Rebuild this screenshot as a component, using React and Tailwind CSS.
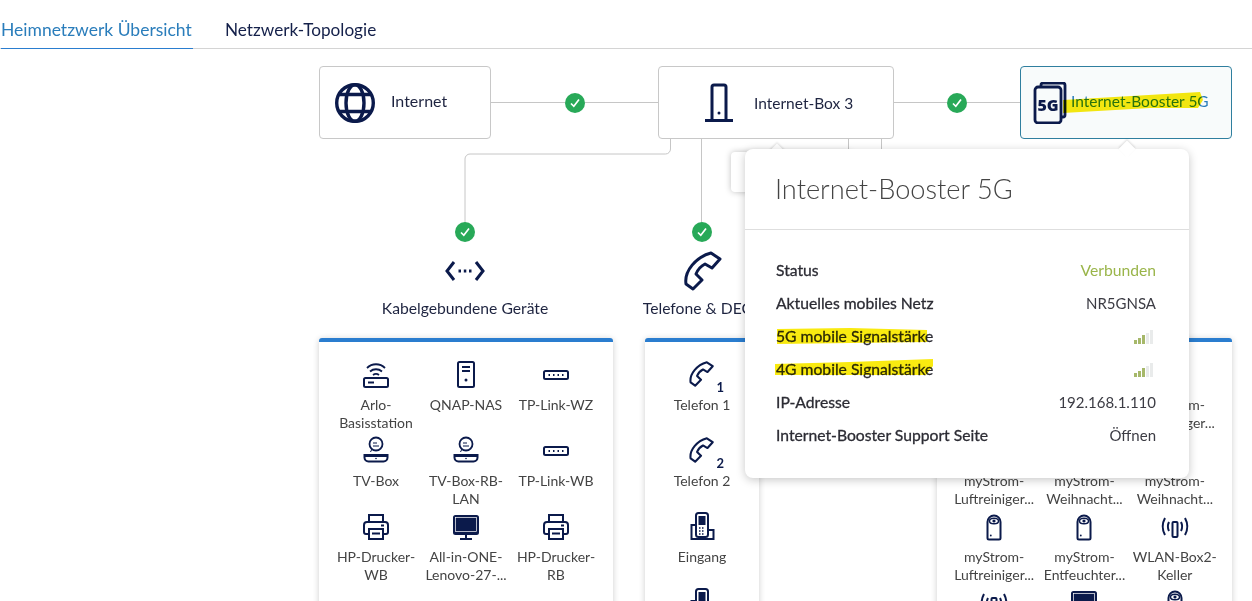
const navy = "#0b1a4b";

function Svg({ size = 32, className = "", children }) {
  return (
    <svg width={size} height={size} viewBox="0 0 32 32" fill="none" stroke={navy} strokeWidth="2" className={className}>
      {children}
    </svg>
  );
}

const RouterWifi = () => (
  <Svg>
    <rect x="4" y="19" width="24" height="9" rx="1.500" />
    <path d="M8 23.500h6" />
    <path d="M7 9c5-5 13-5 18 0M10 12.500c3.500-3 8.500-3 12 0M13 16c2-1.500 4-1.500 6 0" strokeWidth="1.800" />
  </Svg>
);

const Server = () => (
  <Svg>
    <rect x="8" y="3" width="16" height="25" rx="1.500" />
    <path d="M12 8h8M12 12h8" />
    <circle cx="16" cy="21" r="1.500" fill={navy} stroke="none" />
  </Svg>
);

const Switch = () => (
  <Svg>
    <rect x="4" y="12" width="24" height="8" rx="1.500" />
    <path d="M8.500 16h2M13 16h2M17.500 16h2M22 16h2" strokeDasharray="1.500 1" />
  </Svg>
);

const TvBox = () => (
  <Svg>
    <circle cx="16" cy="9" r="6.500" strokeWidth="1.800" />
    <path d="M12 14l-1.500 3M13 8h4M13 11h6" strokeWidth="1" />
    <path d="M4.500 20h23v2.500a4 4 0 0 1-4 4h-15a4 4 0 0 1-4-4z" />
    <path d="M4 20.500h24" strokeWidth="3" />
    <circle cx="16" cy="23.500" r="0.800" fill={navy} stroke="none" />
  </Svg>
);

const Printer = () => (
  <Svg>
    <path d="M9 11V4h14v7" />
    <path d="M9 23H6a2 2 0 0 1-2-2v-7a3 3 0 0 1 3-3h18a3 3 0 0 1 3 3v7a2 2 0 0 1-2 2h-3" />
    <rect x="9" y="18" width="14" height="10" />
    <path d="M12 22.500h8M21 14.500h3" />
  </Svg>
);

const Monitor = () => (
  <Svg>
    <rect x="4" y="5" width="24" height="18" rx="1.500" fill={navy} stroke={navy} />
    <rect x="5.500" y="6.500" width="21" height="14" fill={navy} stroke="#fff" strokeWidth="0.700" />
    <path d="M16 23v5M10 28h12" />
  </Svg>
);

// handset outline, earpiece top right, mouthpiece bottom left
const HandsetPath = ({ size, strokeWidth }) => (
  <svg width={size} height={size} viewBox="0 0 40 40" fill="none" stroke={navy} strokeWidth={strokeWidth} strokeLinejoin="round">
    <path d="M29 2L38 8 30 17 23 13C19 15 16 18 14 23L20 29 11 38 4 33C2 20 14 6 29 2Z" />
  </svg>
);

const Handset = ({ num }) => (
  <div className="relative w-[34px] h-[34px]">
    <div className="absolute left-[3px] top-[3px]">
      <HandsetPath size={26} strokeWidth={3.2} />
    </div>
    <span className="absolute right-[-5px] bottom-[-3px] text-[13px] leading-4 font-bold text-[#0b1a4b]">{num}</span>
  </div>
);

const Dect = () => (
  <Svg>
    <rect x="10" y="2" width="12" height="24" rx="2.500" />
    <rect x="12.500" y="5" width="7" height="9" fill={navy} stroke="none" />
    <path d="M13 17h6M13 20h6M13 23h6" strokeDasharray="1.500 1.500" strokeWidth="1.500" />
    <path d="M9 14H5.500v14h22V19H23" />
  </Svg>
);

const PlugBox = () => (
  <Svg>
    <path d="M9.500 11a6.500 6.500 0 0 1 13 0v16a1.500 1.500 0 0 1-1.500 1.500H11A1.500 1.500 0 0 1 9.500 27z" />
    <ellipse cx="16" cy="10" rx="4.500" ry="2.800" strokeWidth="1.500" />
    <circle cx="16" cy="10" r="1.600" fill={navy} stroke="none" />
    <circle cx="12.800" cy="24.500" r="0.900" fill={navy} stroke="none" />
  </Svg>
);

const WlanBox = () => (
  <Svg>
    <rect x="13.500" y="11" width="5" height="15" rx="1" />
    <path d="M10 11c-1.500 3-1.500 6 0 9M22 11c1.500 3 1.500 6 0 9M6 7c-3 5.500-3 11.500 0 17M26 7c3 5.500 3 11.500 0 17" />
  </Svg>
);

const Check = () => (
  <div className="w-5 h-5 rounded-full bg-[#28a958] flex items-center justify-center shrink-0">
    <svg width="14" height="14" viewBox="0 0 14 14" fill="none" stroke="#fff" strokeWidth="1.700">
      <path d="M3 7.500l2.800 2.800L11 3.500" />
    </svg>
  </div>
);

function Item({ icon, lines }) {
  return (
    <div className="flex flex-col items-center">
      <div className="h-[34px] flex items-center justify-center">{icon}</div>
      <div className="mt-1 text-[14px] leading-[18px] text-[#444] text-center whitespace-nowrap">
        {lines.map((l) => (
          <div key={l}>{l}</div>
        ))}
      </div>
    </div>
  );
}

function Column({ width, icon, title, cols, items, cardHeight, headClass = "" }) {
  return (
    <div className="flex flex-col items-center shrink-0" style={{ width }}>
      <div className={`h-5 ${headClass}`}>{title && <Check />}</div>
      <div className={`mt-[11px] h-9 flex items-center justify-center ${headClass}`}>{icon}</div>
      <div className={`mt-[9px] h-5 text-[15.7px] leading-5 text-[#1e2440] whitespace-nowrap ${headClass}`}>{title}</div>
      <div
        className="mt-5 w-full bg-white border-t-4 border-[#2a7dcf] rounded-t-[3px] shadow-[0_1px_6px_rgba(0,0,0,0.2)] px-3 pt-4"
        style={{ height: cardHeight }}
      >
        <div className={cols === 3 ? "grid grid-cols-3 auto-rows-[76px]" : "grid grid-cols-1 auto-rows-[76px]"}>
          {items.map((it, i) => (
            <Item key={i} icon={it.icon} lines={it.lines} />
          ))}
        </div>
      </div>
    </div>
  );
}

function Signal() {
  const bars = [
    ["h-[4px]", "bg-[#a6b86a]"],
    ["h-[6px]", "bg-[#a6b86a]"],
    ["h-[9px]", "bg-[#a6b86a]"],
    ["h-[11px]", "bg-[#e9ebeb]"],
    ["h-[14px]", "bg-[#e9ebeb]"],
  ];
  return (
    <div className="flex items-end gap-px mr-[3px]">
      {bars.map(([h, c], i) => (
        <div key={i} className={`w-[3px] ${h} ${c}`} />
      ))}
    </div>
  );
}

const Link = () => (
  <div className="flex-1 flex items-center">
    <div className="flex-1 h-px bg-[#c6c6c6]" />
    <Check />
    <div className="flex-1 h-px bg-[#c6c6c6]" />
  </div>
);

const wired = [
  { icon: <RouterWifi />, lines: ["Arlo-", "Basisstation"] },
  { icon: <Server />, lines: ["QNAP-NAS"] },
  { icon: <Switch />, lines: ["TP-Link-WZ"] },
  { icon: <TvBox />, lines: ["TV-Box"] },
  { icon: <TvBox />, lines: ["TV-Box-RB-", "LAN"] },
  { icon: <Switch />, lines: ["TP-Link-WB"] },
  { icon: <Printer />, lines: ["HP-Drucker-", "WB"] },
  { icon: <Monitor />, lines: ["All-in-ONE-", "Lenovo-27-..."] },
  { icon: <Printer />, lines: ["HP-Drucker-", "RB"] },
];

const phones = [
  { icon: <Handset num="1" />, lines: ["Telefon 1"] },
  { icon: <Handset num="2" />, lines: ["Telefon 2"] },
  { icon: <Dect />, lines: ["Eingang"] },
  { icon: <Dect />, lines: [] },
];

const wireless = [
  { icon: null, lines: [] },
  { icon: null, lines: [] },
  { icon: null, lines: ["myStrom-", "Luftreiniger..."] },
  { icon: <PlugBox />, lines: ["myStrom-", "Luftreiniger..."] },
  { icon: <PlugBox />, lines: ["myStrom-", "Weihnacht..."] },
  { icon: <PlugBox />, lines: ["myStrom-", "Weihnacht..."] },
  { icon: <PlugBox />, lines: ["myStrom-", "Luftreiniger..."] },
  { icon: <PlugBox />, lines: ["myStrom-", "Entfeuchter..."] },
  { icon: <WlanBox />, lines: ["WLAN-Box2-", "Keller"] },
  { icon: <WlanBox />, lines: [] },
  { icon: <Monitor />, lines: [] },
  { icon: <PlugBox />, lines: [] },
];

const rows = [
  ["Status", "Verbunden"],
  ["Aktuelles mobiles Netz", "NR5GNSA"],
  ["5G mobile Signalstärke", null],
  ["4G mobile Signalstärke", null],
  ["IP-Adresse", "192.168.1.110"],
  ["Internet-Booster Support Seite", "Öffnen"],
];

export default function App() {
  return (
    <div className="relative w-[1252px] h-[601px] overflow-hidden bg-white font-['Lato','Noto_Sans',sans-serif]">
      <div className="flex h-[49px] border-b border-[#d4d4d4] pl-px">
        <div className="w-[192px] h-[49px] border-b-[1.500px] border-[#2a7dcf] pt-[18px] text-[17.5px] leading-6 text-[#2a7dbb] whitespace-nowrap">
          Heimnetzwerk Übersicht
        </div>
        <div className="ml-8 pt-[18px] text-[17.2px] leading-6 text-[#14204a] whitespace-nowrap">Netzwerk-Topologie</div>
      </div>

      {/* connectors */}
      <svg width="1252" height="601" fill="none" stroke="#c6c6c6" className="absolute left-0 top-0">
        <path d="M670.500 139v10a5 5 0 0 1-5 5H470a5 5 0 0 0-5 5v64M701.500 139v84M848.500 139v12M881.500 139v12" />
      </svg>

      <div className="relative pl-[319px] pr-5 pt-[17px]">
        <div className="flex items-center">
          <div className="w-[172px] h-[73px] border border-[#c8c8c8] rounded bg-white flex items-center pl-[15px] shrink-0">
            <svg width="40" height="48" viewBox="0 0 40 48" fill="none" stroke={navy} strokeWidth="3.400">
              <circle cx="20" cy="24" r="18.300" />
              <ellipse cx="20" cy="24" rx="9" ry="18.300" />
              <path d="M4 15.500h32M4 32.500h32" />
            </svg>
            <span className="ml-4 mb-1 text-[16px] text-[#1e2440]">Internet</span>
          </div>
          <div className="w-[167px] flex"><Link /></div>
          <div className="w-[236px] h-[73px] border border-[#c8c8c8] rounded bg-white flex items-center pl-[45px] shrink-0">
            <svg width="30" height="40" viewBox="0 0 30 40" fill="none" stroke={navy} strokeWidth="3">
              <path d="M8 37V4a2 2 0 0 1 2-2h10a2 2 0 0 1 2 2v33M1 37.500h28" />
              <circle cx="15" cy="30" r="1.500" fill={navy} stroke="none" />
            </svg>
            <span className="ml-5 mt-[2px] text-[15.500px] text-[#1e2440] whitespace-nowrap">Internet-Box 3</span>
          </div>
          <div className="w-[126px] flex"><Link /></div>
          <div className="w-[212px] h-[73px] border border-[#2f7f9f] rounded bg-[#f8fbfb] flex items-center pl-3 shrink-0">
            <svg width="34" height="42" viewBox="0 0 34 42" fill="none" stroke={navy} strokeWidth="2.800">
              <path d="M8 4V3a2 2 0 0 1 2-2h20a2 2 0 0 1 2 2v30a2 2 0 0 1-2 2h-1" />
              <rect x="2" y="5" width="26" height="36" rx="3" fill="#f8fbfb" />
              <text x="15" y="29" textAnchor="middle" fontSize="16" fontWeight="800" fill={navy} stroke="none" fontFamily="Open Sans">
                5G
              </text>
            </svg>
            <span className="ml-[4px] mb-[2px] text-[15.500px] text-[#2a7dbb] whitespace-nowrap">Internet-Booster 5G</span>
          </div>
        </div>

        <div className="mt-[83px] flex gap-8">
          <Column
            width={294}
            cols={3}
            title="Kabelgebundene Geräte"
            items={wired}
            cardHeight={300}
            headClass="mr-[2px]"
            icon={
              <svg width="40" height="24" viewBox="0 0 40 24" fill="none" stroke={navy} strokeWidth="3">
                <path d="M9 3L2 12l7 9M31 3l7 9-7 9" />
                <path d="M13.500 12h2.500M18.800 12h2.500M24 12h2.500" />
              </svg>
            }
          />
          <Column
            width={114}
            cols={1}
            title="Telefone & DECT"
            items={phones}
            cardHeight={300}
            icon={<HandsetPath size={40} strokeWidth={3} />}
          />
          <Column width={114} cols={1} items={[]} cardHeight={100} />
          <Column width={295} cols={3} items={wireless} cardHeight={300} />
        </div>
      </div>

      {/* popover behind the active one */}
      <div className="absolute left-[731px] top-[152px] w-[120px] h-10 bg-white rounded shadow-[0_0_6px_rgba(0,0,0,0.25)]">
        <div className="absolute left-[40px] top-[-6px] w-3 h-3 rotate-45 bg-white shadow-[-1px_-1px_2px_rgba(0,0,0,0.1)]" />
      </div>

      {/* booster popover */}
      <div className="absolute left-[745px] top-[149px] w-[444px] h-[329px] bg-white rounded-lg shadow-[0_2px_10px_rgba(0,0,0,0.22)]">
        <div className="absolute left-[376px] top-[-6px] w-3 h-3 rotate-45 bg-white shadow-[-1px_-1px_2px_rgba(0,0,0,0.12)]" />
        <div className="relative h-[81px] border-b border-[#dedede] pl-[30px] pt-[22px] text-[27.200px] leading-9 font-light text-[#444]">
          Internet-Booster 5G
        </div>
        <div className="pt-6 pl-[31px] pr-[33px]">
          {rows.map(([label, value]) => (
            <div key={label} className="h-[33px] flex items-center justify-between">
              <span className="text-[15.700px] text-[#2c2c34] [-webkit-text-stroke:0.3px_#2c2c34]">{label}</span>
              {value ? (
                <span className={value === "Verbunden" ? "text-[15.700px] text-[#9ab54a]" : "text-[15px] text-[#3c3c44]"}>{value}</span>
              ) : (
                <Signal />
              )}
            </div>
          ))}
        </div>
      </div>

      {/* marker strokes on top of the screenshot */}
      <svg width="1252" height="601" fill="#f9ea10" className="absolute left-0 top-0 mix-blend-multiply pointer-events-none">
        <path d="M1063 100L1200 92 1203 100 1198 108 1150 108 1063 113z" />
        <path d="M777 329L850 328 927 330v12L777 344z" />
        <path d="M775 364L850 362 933 359v7L926 375 775 375z" />
      </svg>
    </div>
  );
}
